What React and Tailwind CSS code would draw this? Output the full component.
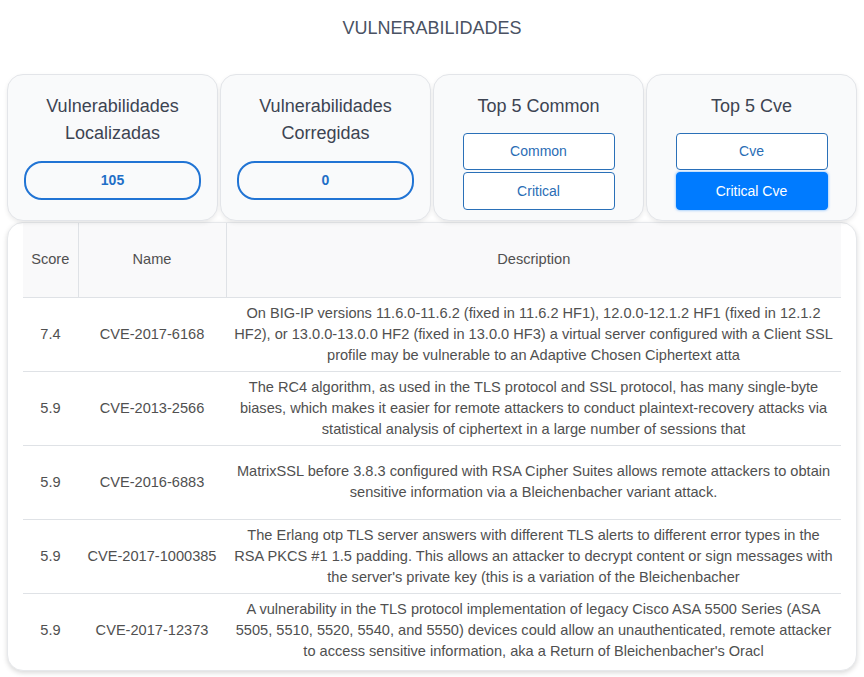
import React from "react";

// descriptions keep the line breaks seen in the table
const rows = [
  {
    score: "7.4",
    name: "CVE-2017-6168",
    lines: [
      "On BIG-IP versions 11.6.0-11.6.2 (fixed in 11.6.2 HF1), 12.0.0-12.1.2 HF1 (fixed in 12.1.2",
      "HF2), or 13.0.0-13.0.0 HF2 (fixed in 13.0.0 HF3) a virtual server configured with a Client SSL",
      "profile may be vulnerable to an Adaptive Chosen Ciphertext atta",
    ],
  },
  {
    score: "5.9",
    name: "CVE-2013-2566",
    lines: [
      "The RC4 algorithm, as used in the TLS protocol and SSL protocol, has many single-byte",
      "biases, which makes it easier for remote attackers to conduct plaintext-recovery attacks via",
      "statistical analysis of ciphertext in a large number of sessions that",
    ],
  },
  {
    score: "5.9",
    name: "CVE-2016-6883",
    lines: [
      "MatrixSSL before 3.8.3 configured with RSA Cipher Suites allows remote attackers to obtain",
      "sensitive information via a Bleichenbacher variant attack.",
    ],
  },
  {
    score: "5.9",
    name: "CVE-2017-1000385",
    lines: [
      "The Erlang otp TLS server answers with different TLS alerts to different error types in the",
      "RSA PKCS #1 1.5 padding. This allows an attacker to decrypt content or sign messages with",
      "the server's private key (this is a variation of the Bleichenbacher",
    ],
  },
  {
    score: "5.9",
    name: "CVE-2017-12373",
    lines: [
      "A vulnerability in the TLS protocol implementation of legacy Cisco ASA 5500 Series (ASA",
      "5505, 5510, 5520, 5540, and 5550) devices could allow an unauthenticated, remote attacker",
      "to access sensitive information, aka a Return of Bleichenbacher's Oracl",
    ],
  },
];

function CountCard({ title, value }) {
  return (
    <div className="flex flex-col items-center rounded-[16px] border border-[#e3e5e9] bg-[#f9fafb] px-4 pt-[18px] pb-[20px] shadow-[0_2px_4px_rgba(0,0,0,0.08)]">
      <h3 className="text-center text-[18px] leading-[27px] text-[#3d4452]">
        {title}
      </h3>
      <div className="mt-[14px] flex h-[39px] w-full items-center justify-center rounded-[18px] border-2 border-[#2174d4] text-[14px] font-bold text-[#1f6fc7]">
        {value}
      </div>
    </div>
  );
}

function ButtonCard({ title, first, second, active }) {
  return (
    <div className="flex flex-col items-center rounded-[16px] border border-[#e3e5e9] bg-[#f9fafb] px-4 pt-[18px] shadow-[0_2px_4px_rgba(0,0,0,0.08)]">
      <h3 className="text-center text-[18px] leading-[27px] text-[#3d4452]">
        {title}
      </h3>
      <div className="mt-[13px] flex w-[152px] flex-col gap-[2px]">
        <button className="h-[37px] rounded-[4px] border border-[#2a70b8] bg-white text-[14px] text-[#2a6db5]">
          {first}
        </button>
        <button
          className={
            active
              ? "h-[38px] rounded-[4px] border border-[#007bff] bg-[#007bff] text-[14px] text-white shadow-[0_0_3px_rgba(0,123,255,0.6)]"
              : "h-[38px] rounded-[4px] border border-[#2a70b8] bg-white text-[14px] text-[#2a6db5]"
          }
        >
          {second}
        </button>
      </div>
    </div>
  );
}

export default function App() {
  return (
    <div className="min-h-screen bg-white font-['Liberation_Sans',Arial,sans-serif]">
      <h1 className="pt-[18px] text-center text-[18px] leading-[20px] text-[#4a5263]">
        VULNERABILIDADES
      </h1>

      <div className="mx-[7px] mt-[36px] grid grid-cols-4 gap-[2px]">
        <CountCard title={<>Vulnerabilidades<br />Localizadas</>} value="105" />
        <CountCard title={<>Vulnerabilidades<br />Corregidas</>} value="0" />
        <ButtonCard title="Top 5 Common" first="Common" second="Critical" />
        <ButtonCard title="Top 5 Cve" first="Cve" second="Critical Cve" active />
      </div>

      {/* Table */}
      <div className="mx-[7px] mt-px rounded-[16px] border border-[#e6e8eb] bg-white px-[15px] pb-[3px] shadow-[0_2px_5px_rgba(0,0,0,0.15)]">
        <table className="w-full table-fixed border-collapse text-[14.6px] leading-[21px] text-[#505050]">
          <thead>
            <tr className="h-[74px] bg-[#f9f9fa] border-b border-[#dfe2e6]">
              <th className="w-[55px] border-r border-[#dfe2e6] font-normal">Score</th>
              <th className="w-[148px] border-r border-[#dfe2e6] font-normal">Name</th>
              <th className="font-normal">Description</th>
            </tr>
          </thead>
          <tbody>
            {rows.map((r, i) => (
              <tr
                key={r.name}
                className={
                  i < rows.length - 1
                    ? "h-[74px] border-b border-[#dfe2e6]"
                    : "h-[74px]"
                }
              >
                <td className="text-center align-middle">{r.score}</td>
                <td className="text-center align-middle whitespace-nowrap">{r.name}</td>
                <td className="text-center align-middle whitespace-nowrap">
                  {r.lines.map((line, j) => (
                    <div key={j}>{line}</div>
                  ))}
                </td>
              </tr>
            ))}
          </tbody>
        </table>
      </div>
    </div>
  );
}
